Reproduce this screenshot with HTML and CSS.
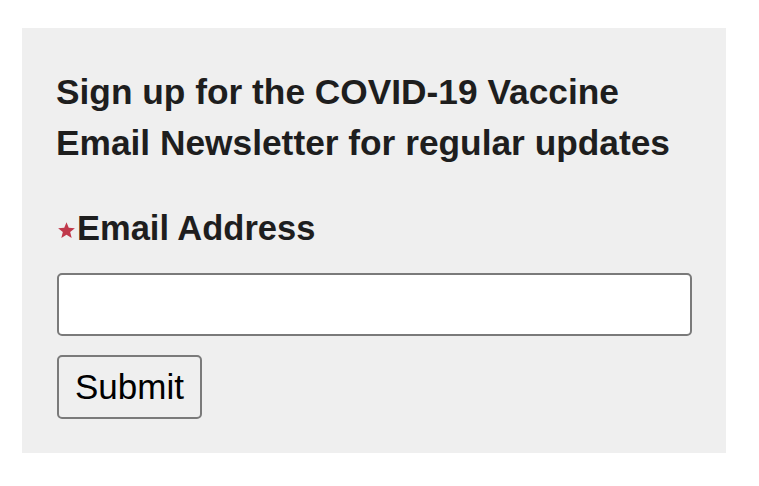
FILE: index.html
```html
<!DOCTYPE html>
<html lang="en">

<head>
    <meta charset="UTF-8">
    <meta name="viewport" content="width=device-width, initial-scale=1.0">
    <title>newsletter</title>
    <link rel="stylesheet" href="styles.css">
</head>

<body>
    <div class="signup">
        <h2 class="title">Sign up for the COVID-19 Vaccine Email Newsletter for regular updates</h2>
        <form class="form">
            <label for="email" class="label">
                <svg class="req" viewBox="0 0 24 24" width="19" height="18" aria-hidden="true">
                    <path d="M12 1.5l3 7.6 8.2.5-6.3 5.2 2 8L12 18.4l-6.9 4.4 2-8L.8 9.6 9 9.1z" fill="#c0394b"/>
                </svg>Email Address
            </label>
            <input type="email" id="email" class="email">
            <button type="submit" class="submit">Submit</button>
        </form>
    </div>
</body>

</html>
```

FILE: styles.css
```css
body {
    margin: 0;
    background: #fff;
    font-family: "Liberation Sans", Arial, sans-serif;
    color: #1e1e1e;
}

.signup {
    background: #efefef;
    margin: 28px 0 0 22px;
    width: 704px;
    height: 425px;
    box-sizing: border-box;
    padding: 38px 34px 0 34px;
}

.title {
    margin: 0;
    font-size: 35.3px;
    line-height: 51px;
    font-weight: bold;
}

.form {
    display: flex;
    flex-direction: column;
    align-items: flex-start;
}

.label {
    display: flex;
    align-items: center;
    margin-top: 40px;
    font-size: 34.5px;
    line-height: 40px;
    font-weight: bold;
}

.req {
    margin: 4px 1px 0 1px;
}

.email {
    margin: 25px 0 0 1px;
    width: 635px;
    height: 63px;
    box-sizing: border-box;
    border: 2px solid #7a7a7a;
    border-radius: 5px;
    background: #fff;
}

.submit {
    margin: 19px 0 0 1px;
    height: 64px;
    padding: 0 16px;
    font-family: "Liberation Sans", Arial, sans-serif;
    font-size: 35px;
    color: #000;
    background: #efefef;
    border: 2px solid #7a7a7a;
    border-radius: 5px;
}
```
